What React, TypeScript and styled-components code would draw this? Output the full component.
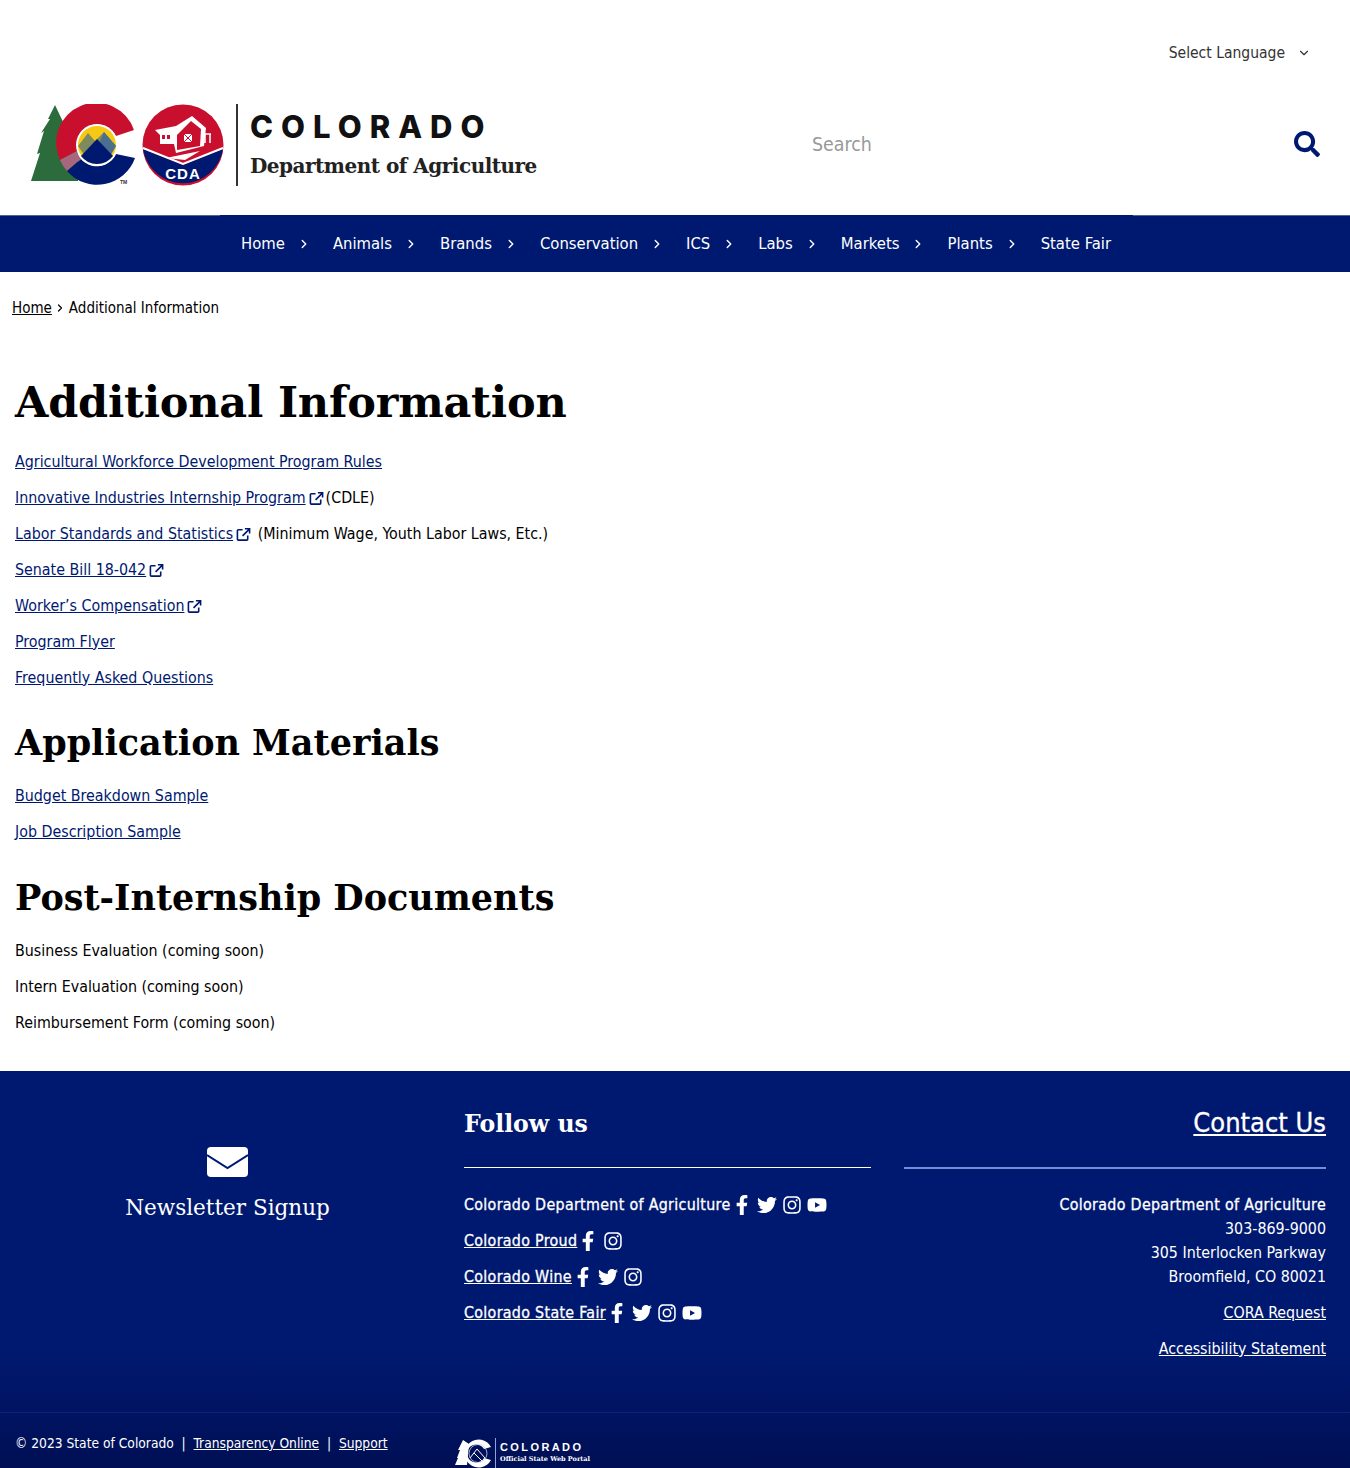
import React from "react";
import styled, { createGlobalStyle } from "styled-components";
import { ChevronDown, ChevronRight } from "lucide-react";
import { FaFacebookF, FaInstagram, FaSearch, FaTwitter, FaYoutube } from "react-icons/fa";

const NAVY = "#001970";
const BODY_FONT = `"DejaVu Sans", "Noto Sans", sans-serif`;
const SLAB_FONT = `"DejaVu Serif", serif`;

const GlobalStyle = createGlobalStyle`
  html, body {
    margin: 0;
    padding: 0;
    background: #fff;
    color: #000;
    font-family: ${BODY_FONT};
    font-stretch: condensed;
    font-size: 15.85px;
  }
  * { box-sizing: border-box; }
`;

const navItems = ["Home", "Animals", "Brands", "Conservation", "ICS", "Labs", "Markets", "Plants", "State Fair"];

const socialRows = [
  { name: "Colorado Department of Agriculture", link: false, icons: ["f", "t", "i", "y"] },
  { name: "Colorado Proud", link: true, icons: ["f", "i"] },
  { name: "Colorado Wine", link: true, icons: ["f", "t", "i"] },
  { name: "Colorado State Fair", link: true, icons: ["f", "t", "i", "y"] },
];

function ExternalIcon() {
  return (
    <S.External viewBox="0 0 16 16" fill="none" stroke={NAVY} strokeWidth="1.7">
      <path d="M7 3H2.500A1 1 0 0 0 1.500 4v9a1 1 0 0 0 1 1h9a1 1 0 0 0 1-1V9" />
      <path d="M7 9.500 14 2.500M9.500 1.800h5v5" />
    </S.External>
  );
}

function SocialIcon({ kind }: { kind: string }) {
  if (kind === "f") return <S.Facebook><FaFacebookF /></S.Facebook>;
  if (kind === "t") return <S.Social><FaTwitter /></S.Social>;
  if (kind === "i") return <S.Social><FaInstagram /></S.Social>;
  return <S.Social><FaYoutube /></S.Social>;
}

function ColoradoMark() {
  return (
    <svg width="196" height="84" viewBox="0 0 196 84">
      <path d="M25 1 18 15 20 15 11 29 14 27 7 50 10 49 1 77 48 77 48 20 34 20Z" fill="#2b6b3c" />
      <path d="M104 26A40 40 0 1 0 30 56L47 47A21 21 0 0 1 86 32Z" fill="#c8102e" />
      <path d="M30 56A40 40 0 0 0 37 67L51 55A21 21 0 0 1 47 47Z" fill="#a8677d" />
      <path d="M37 67A40 40 0 0 0 105 54L86 50A21 21 0 0 1 51 55Z" fill="#001970" />
      <circle cx="67" cy="41" r="21" fill="#fff" />
      <circle cx="67" cy="41" r="19" fill="#f6c915" />
      <path d="M48 42 58 29 65 37 74 28 86 42 80 52 55 52Z" fill="#7f8a5e" />
      <path d="M74 28 86 42 80 52 69 40Z" fill="#4a6f8f" />
      <path d="M51 52 67 35 83 52A20 20 0 0 1 51 52Z" fill="#001970" />
      <text x="90" y="80" fontSize="5" fontWeight="700" fill="#333" fontFamily="Liberation Sans">TM</text>
      <circle cx="153" cy="41" r="40.500" fill="#c8102e" />
      <path d="M113 45 153 61 193 45A40.500 40.500 0 0 1 113 45Z" fill="#001970" />
      <path d="M113 44 153 60 193 44" fill="none" stroke="#fff" strokeWidth="2" />
      <path d="M125 26 146 22 162 12 176 24 174 42 146 49 144 40 130 40 130 31Z" fill="#fff" />
      <path d="M147 31 161 17 171 25 170 42 147 46Z" fill="#c8102e" />
      <rect x="154" y="30" width="8" height="8" fill="#fff" />
      <path d="M154 30 162 38M162 30 154 38" stroke="#c8102e" strokeWidth="1" />
      <rect x="132" y="31" width="3" height="4" fill="#c8102e" />
      <rect x="137" y="31" width="3" height="4" fill="#c8102e" />
      <path d="M172 30 181 30M175 30 175 39M180 30 180 39" stroke="#fff" strokeWidth="1.500" fill="none" />
      <path d="M136 54 170 47 155 56Z" fill="#fff" />
      <text x="153" y="75" textAnchor="middle" fontSize="15" fontWeight="700" letterSpacing="1" fill="#fff" fontFamily="Liberation Sans">CDA</text>
    </svg>
  );
}

function PortalMark() {
  return (
    <svg width="38" height="30" viewBox="0 0 38 30">
      <path d="M8 2 3 12 5 12 2 20 3 20 0 27 12 27 14 6Z" fill="#fff" />
      <path d="M36 9A14 14 0 1 0 36 22L29 20A9 9 0 1 1 29 11Z" fill="#fff" />
      <circle cx="23" cy="15.500" r="9" fill="none" stroke="#c9d2ee" strokeWidth="0.800" />
      <path d="M15 20 22 11 30 20M19 15 27 23" fill="none" stroke="#fff" strokeWidth="1" />
    </svg>
  );
}

export default function App() {
  return (
    <>
      <GlobalStyle />
      <S.LanguageBar>
        <S.Language>Select Language <ChevronDown size={14} strokeWidth={2} /></S.Language>
      </S.LanguageBar>
      <S.Header>
        <S.Logo>
          <ColoradoMark />
          <S.LogoText>
            <S.LogoState>COLORADO</S.LogoState>
            <S.LogoDept>Department of Agriculture</S.LogoDept>
          </S.LogoText>
        </S.Logo>
        <S.Search>
          <S.SearchLabel>Search</S.SearchLabel>
          <FaSearch size={26} color={NAVY} />
        </S.Search>
      </S.Header>
      <S.Nav>
        {navItems.map((item, i) => (
          <S.NavItem key={item}>
            {item}
            {i < navItems.length - 1 && <ChevronRight size={14} strokeWidth={2.4} />}
          </S.NavItem>
        ))}
      </S.Nav>
      <S.Breadcrumb>
        <S.BreadcrumbLink href="#">Home</S.BreadcrumbLink>
        <ChevronRight size={12} strokeWidth={2.4} />
        Additional Information
      </S.Breadcrumb>
      <S.Main>
        <S.Title>Additional Information</S.Title>
        <S.Para><S.Link href="#">Agricultural Workforce Development Program Rules</S.Link></S.Para>
        <S.Para><S.Link href="#">Innovative Industries Internship Program</S.Link><ExternalIcon />(CDLE)</S.Para>
        <S.Para><S.Link href="#">Labor Standards and Statistics</S.Link><ExternalIcon />&nbsp;(Minimum Wage, Youth Labor Laws, Etc.)</S.Para>
        <S.Para><S.Link href="#">Senate Bill 18-042</S.Link><ExternalIcon /></S.Para>
        <S.Para><S.Link href="#">Worker’s Compensation</S.Link><ExternalIcon /></S.Para>
        <S.Para><S.Link href="#">Program Flyer</S.Link></S.Para>
        <S.Para><S.Link href="#">Frequently Asked Questions</S.Link></S.Para>
        <S.Heading>Application Materials</S.Heading>
        <S.Para><S.Link href="#">Budget Breakdown Sample</S.Link></S.Para>
        <S.Para><S.Link href="#">Job Description Sample</S.Link></S.Para>
        <S.Heading>Post-Internship Documents</S.Heading>
        <S.Para>Business Evaluation (coming soon)</S.Para>
        <S.Para>Intern Evaluation (coming soon)</S.Para>
        <S.Para>Reimbursement Form (coming soon)</S.Para>
      </S.Main>
      <S.Footer>
        <S.FooterTop>
          <S.Newsletter>
            <S.Envelope viewBox="0 0 41 30">
              <rect width="41" height="30" rx="4" fill="#fff" />
              <path d="M0 8 20.500 21 41 8" fill="none" stroke={NAVY} strokeWidth="2" />
            </S.Envelope>
            <S.NewsletterLabel>Newsletter Signup</S.NewsletterLabel>
          </S.Newsletter>
          <S.FollowColumn>
            <S.FooterHeading>Follow us</S.FooterHeading>
            {socialRows.map((row) => (
              <S.SocialRow key={row.name}>
                <S.SocialName $link={row.link}>{row.name}</S.SocialName>
                {row.icons.map((kind) => <SocialIcon key={kind} kind={kind} />)}
              </S.SocialRow>
            ))}
          </S.FollowColumn>
          <S.ContactColumn>
            <S.ContactHeading href="#">Contact Us</S.ContactHeading>
            <S.Address>
              <S.AddressName>Colorado Department of Agriculture</S.AddressName><br />
              303-869-9000<br />
              305 Interlocken Parkway<br />
              Broomfield, CO 80021
            </S.Address>
            <S.ContactLink href="#">CORA Request</S.ContactLink>
            <S.ContactLink href="#">Accessibility Statement</S.ContactLink>
          </S.ContactColumn>
        </S.FooterTop>
        <S.FooterBottom>
          <S.Legal>
            © 2023 State of Colorado &nbsp;|&nbsp; <S.LegalLink href="#">Transparency Online</S.LegalLink> &nbsp;|&nbsp; <S.LegalLink href="#">Support</S.LegalLink>
          </S.Legal>
          <S.Portal>
            <PortalMark />
            <S.PortalText>
              <S.PortalState>COLORADO</S.PortalState>
              <S.PortalSub>Official State Web Portal</S.PortalSub>
            </S.PortalText>
          </S.Portal>
        </S.FooterBottom>
      </S.Footer>
    </>
  );
}

const S = {
  LanguageBar: styled.div`
    display: flex;
    justify-content: flex-end;
    height: 103px;
    padding: 43px 39px 0 0;
  `,
  Language: styled.div`
    display: flex;
    align-items: center;
    gap: 12px;
    height: 20px;
    font-size: 15.5px;
    color: #333;
  `,
  Header: styled.header`
    display: flex;
    justify-content: space-between;
    height: 112px;
    padding: 1px 30px 0 30px;
  `,
  Logo: styled.div`
    display: flex;
    align-items: flex-start;
  `,
  LogoText: styled.div`
    display: flex;
    flex-direction: column;
    height: 82px;
    margin-left: 10px;
    padding-left: 12px;
    border-left: 2px solid #333;
  `,
  LogoState: styled.div`
    margin-top: 5px;
    font-family: "Inter", sans-serif;
    font-stretch: normal;
    font-size: 31px;
    line-height: 36px;
    font-weight: 800;
    letter-spacing: 8px;
    color: #111;
  `,
  LogoDept: styled.div`
    margin-top: 8px;
    font-family: ${SLAB_FONT};
    font-stretch: normal;
    font-size: 20px;
    line-height: 26px;
    font-weight: 700;
    letter-spacing: -0.5px;
    color: #222;
  `,
  Search: styled.div`
    display: flex;
    align-items: center;
    justify-content: space-between;
    width: 508px;
    height: 80px;
  `,
  SearchLabel: styled.span`
    font-size: 19.4px;
    color: #999;
  `,
  Nav: styled.nav`
    display: flex;
    justify-content: center;
    align-items: center;
    gap: 22px;
    height: 57px;
    padding-left: 2px;
    background:
      linear-gradient(to right, #55648f 220px, ${NAVY} 220px, ${NAVY} 1133px, #55648f 1133px) top / 100% 1px no-repeat,
      ${NAVY};
    color: #fff;
  `,
  NavItem: styled.div`
    display: flex;
    align-items: center;
    gap: 12px;
    font-size: 16.5px;
  `,
  Breadcrumb: styled.div`
    display: flex;
    align-items: center;
    gap: 2.5px;
    height: 20px;
    margin: 26px 0 0 12px;
    font-size: 15px;
  `,
  BreadcrumbLink: styled.a`
    color: #000;
  `,
  Main: styled.main`
    padding: 56px 15px 22.5px;
  `,
  Title: styled.h1`
    margin: 0 0 21px;
    font-family: ${SLAB_FONT};
    font-stretch: normal;
    font-size: 43px;
    line-height: 56px;
    font-weight: 700;
    letter-spacing: -0.2px;
  `,
  Heading: styled.h2`
    margin: 33px 0 19.5px;
    font-family: ${SLAB_FONT};
    font-stretch: normal;
    font-size: 35px;
    line-height: 46px;
    font-weight: 700;
  `,
  Para: styled.p`
    display: flex;
    align-items: center;
    height: 20px;
    margin: 0 0 16px;
  `,
  Link: styled.a`
    color: ${NAVY};
  `,
  External: styled.svg`
    width: 15px;
    height: 15px;
    margin: 2px 2px 0 3px;
  `,
  Footer: styled.footer`
    background: linear-gradient(180deg, ${NAVY} 0%, ${NAVY} 70%, #000f55 100%);
    color: #fff;
  `,
  FooterTop: styled.div`
    display: grid;
    grid-template-columns: 455px 416px 422px;
    height: 341px;
    padding-top: 33px;
  `,
  Newsletter: styled.div`
    display: flex;
    flex-direction: column;
    align-items: center;
    padding-top: 43px;
  `,
  Envelope: styled.svg`
    width: 41px;
    height: 30px;
  `,
  NewsletterLabel: styled.div`
    margin-top: 17px;
    font-family: ${SLAB_FONT};
    font-stretch: normal;
    font-size: 21.5px;
    line-height: 28px;
  `,
  FollowColumn: styled.div`
    margin-left: 9px;
    width: 407px;
  `,
  FooterHeading: styled.h2`
    height: 64px;
    margin: 0 0 27px;
    border-bottom: 1px solid #fff;
    font-family: ${SLAB_FONT};
    font-stretch: normal;
    font-size: 23.6px;
    line-height: 40px;
    font-weight: 700;
  `,
  SocialRow: styled.div`
    display: flex;
    align-items: center;
    height: 20px;
    margin-bottom: 16px;
  `,
  SocialName: styled.span<{ $link: boolean }>`
    margin-right: 1px;
    letter-spacing: 0.32px;
    -webkit-text-stroke: 0.3px #fff;
    text-decoration: ${({ $link }) => ($link ? "underline" : "none")};
  `,
  Facebook: styled.span`
    display: flex;
    width: 20px;
    margin-right: 5px;
    font-size: 20px;
  `,
  Social: styled.span`
    display: flex;
    width: 20px;
    margin-right: 5px;
    font-size: 20px;
  `,
  ContactColumn: styled.div`
    display: flex;
    flex-direction: column;
    align-items: flex-end;
    margin-left: 33px;
    width: 422px;
  `,
  ContactHeading: styled.a`
    display: block;
    width: 100%;
    height: 65px;
    margin-bottom: 24px;
    border-bottom: 2px solid #6f8fd8;
    color: #fff;
    font-size: 27px;
    -webkit-text-stroke: 0.3px #fff;
    line-height: 38px;
    text-align: right;
  `,
  Address: styled.div`
    margin-bottom: 14px;
    line-height: 24px;
    text-align: right;
  `,
  AddressName: styled.span`
    letter-spacing: 0.32px;
    -webkit-text-stroke: 0.3px #fff;
  `,
  ContactLink: styled.a`
    height: 20px;
    margin-bottom: 16px;
    color: #fff;
  `,
  FooterBottom: styled.div`
    display: flex;
    height: 56px;
    padding: 22px 0 0 15px;
    border-top: 1px solid #0a2380;
  `,
  Legal: styled.div`
    width: 440px;
    font-size: 13.7px;
  `,
  LegalLink: styled.a`
    color: #fff;
  `,
  Portal: styled.div`
    display: flex;
    align-items: flex-start;
    margin-top: 3px;
  `,
  PortalText: styled.div`
    height: 30px;
    margin-left: 2px;
    padding: 2px 0 0 4px;
    border-left: 1px solid #8fa3d6;
  `,
  PortalState: styled.div`
    font-family: "Liberation Sans", sans-serif;
    font-size: 11px;
    line-height: 14px;
    font-weight: 700;
    letter-spacing: 2.4px;
  `,
  PortalSub: styled.div`
    font-family: ${SLAB_FONT};
    font-stretch: normal;
    font-size: 6.5px;
    line-height: 11px;
    font-weight: 700;
  `,
};
